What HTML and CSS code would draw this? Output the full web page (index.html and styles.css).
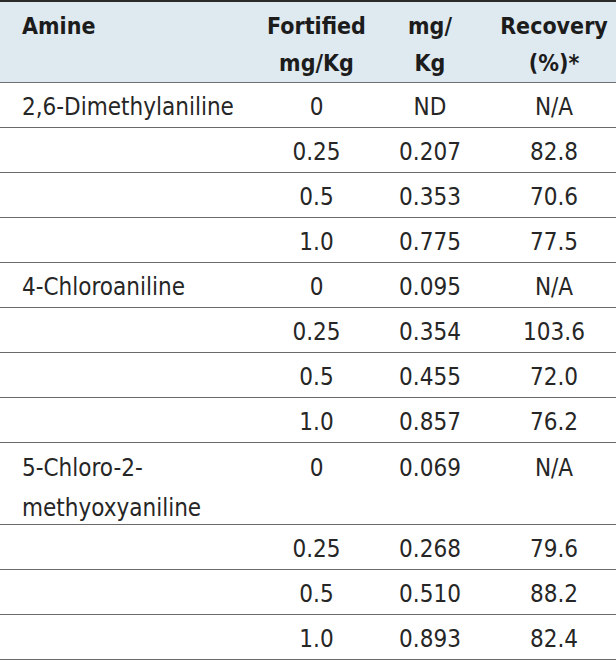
FILE: index.html
```html
<!DOCTYPE html>
<html>
<head>
<meta charset="utf-8">
<link rel="stylesheet" href="styles.css">
</head>
<body>
<table class="data">
  <colgroup>
    <col class="c-amine">
    <col class="c-fort">
    <col class="c-mg">
    <col class="c-rec">
  </colgroup>
  <thead>
    <tr class="head">
      <th class="name">Amine</th>
      <th>Fortified<br>mg/Kg</th>
      <th>mg/<br>Kg</th>
      <th>Recovery<br>(%)*</th>
    </tr>
  </thead>
  <tbody>
    <tr><td class="name">2,6-Dimethylaniline</td><td>0</td><td>ND</td><td>N/A</td></tr>
    <tr><td class="name"></td><td>0.25</td><td>0.207</td><td>82.8</td></tr>
    <tr><td class="name"></td><td>0.5</td><td>0.353</td><td>70.6</td></tr>
    <tr><td class="name"></td><td>1.0</td><td>0.775</td><td>77.5</td></tr>
    <tr><td class="name">4-Chloroaniline</td><td>0</td><td>0.095</td><td>N/A</td></tr>
    <tr><td class="name"></td><td>0.25</td><td>0.354</td><td>103.6</td></tr>
    <tr><td class="name"></td><td>0.5</td><td>0.455</td><td>72.0</td></tr>
    <tr><td class="name"></td><td>1.0</td><td>0.857</td><td>76.2</td></tr>
    <tr class="tall"><td class="name"><div class="wrap">5-Chloro-2-<br>methyoxyaniline</div></td><td><div class="wrap">0</div></td><td><div class="wrap">0.069</div></td><td><div class="wrap">N/A</div></td></tr>
    <tr><td class="name"></td><td>0.25</td><td>0.268</td><td>79.6</td></tr>
    <tr><td class="name"></td><td>0.5</td><td>0.510</td><td>88.2</td></tr>
    <tr><td class="name"></td><td>1.0</td><td>0.893</td><td>82.4</td></tr>
  </tbody>
</table>
</body>
</html>
```
FILE: styles.css
```css
html, body {
  margin: 0;
  padding: 0;
  background: #ffffff;
}
body {
  font-family: "DejaVu Sans Condensed", "DejaVu Sans", sans-serif;
  color: #262626;
  font-size: 24px;
}
.data {
  width: 616px;
  border-collapse: collapse;
  table-layout: fixed;
  border-top: 2px solid #2b2b2b;
}
.c-amine { width: 265px; }
.c-fort { width: 103px; }
.c-mg { width: 124px; }
.c-rec { width: 124px; }
.head {
  background: #dfeaf0;
  height: 80px;
  border-bottom: 1px solid #707070;
}
.head th {
  font-weight: bold;
  font-size: 23px;
  text-align: center;
  vertical-align: top;
  line-height: 37px;
  padding: 6px 0 0 0;
  color: #1c1c1c;
}
.head th.name {
  text-align: left;
  padding-left: 22px;
}
tbody tr {
  height: 45px;
  border-bottom: 1px solid #6a6a6a;
}
tbody tr.tall {
  height: 82px;
}
td {
  text-align: center;
  vertical-align: top;
  padding: 9px 0 0 0;
  line-height: 30px;
}
td.name {
  text-align: left;
  padding-left: 22px;
}
tr.tall td {
  line-height: 40px;
  padding-top: 5px;
}
.wrap {
  height: 75px;
}
```
